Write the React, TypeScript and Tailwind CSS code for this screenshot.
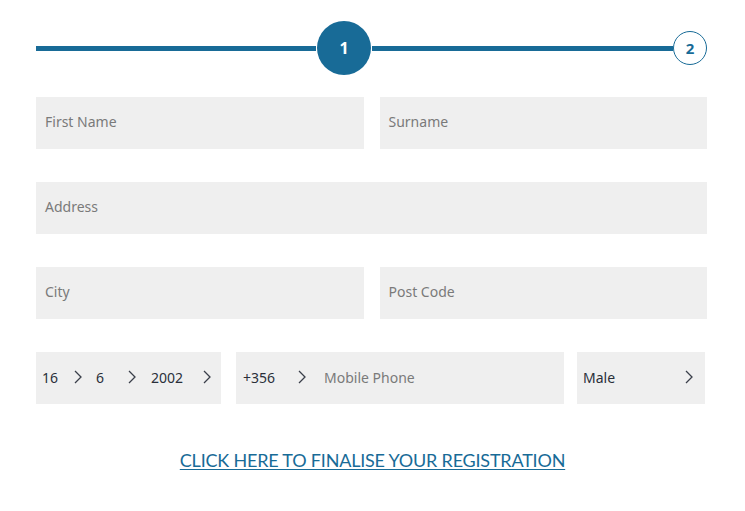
const blue = 'text-[#186b97]';

const Chevron = () => (
  <svg width="8" height="14" viewBox="0 0 8 14" className="shrink-0">
    <polyline points="1,1 7,7 1,13" fill="none" stroke="#3a3f4a" strokeWidth="1.3" />
  </svg>
);

const Field = ({ label, className = '' }: { label: string; className?: string }) => (
  <div className={`h-[52px] bg-[#efefef] flex items-center px-[9px] pb-[3px] text-[14px] text-[#7a7a7a] ${className}`}>
    {label}
  </div>
);

export default function App() {
  return (
    <div className="w-[745px] h-[511px] bg-white font-['Noto_Sans',sans-serif]">
      <div className="pl-[36px] pr-[38px]">
        {/* steps */}
        <div className="flex items-center h-[95px] pt-[1px]">
          <div className="w-[280px] h-[5px] bg-[#186b97]" />
          <div className="w-[54px] h-[54px] rounded-full bg-[#186b97] text-white font-bold text-[16px] flex items-center justify-center mx-[1px] pb-[1px]">
            1
          </div>
          <div className="flex-1 h-[5px] bg-[#186b97]" />
          <div className={`w-[34px] h-[34px] rounded-full border border-[#186b97] ${blue} font-bold text-[15px] flex items-center justify-center`}>
            2
          </div>
        </div>

        <div className="flex flex-col gap-[33px] mt-[2px]">
          <div className="flex gap-[16px]">
            <Field label="First Name" className="flex-1" />
            <Field label="Surname" className="flex-1" />
          </div>
          <Field label="Address" />
          <div className="flex gap-[16px]">
            <Field label="City" className="flex-1" />
            <Field label="Post Code" className="flex-1" />
          </div>
          <div className="flex text-[14px] text-[#2a2f3a]">
            <div className="w-[185px] h-[52px] bg-[#efefef] flex items-center pl-[6px] pb-[2px]">
              <span className="w-[32px] shrink-0">16</span>
              <Chevron />
              <span className="w-[46px] shrink-0 pl-[14px]">6</span>
              <Chevron />
              <span className="w-[67px] shrink-0 pl-[15px]">2002</span>
              <Chevron />
            </div>
            <div className="w-[328px] h-[52px] bg-[#efefef] flex items-center pl-[7px] ml-[15px] pb-[2px]">
              <span className="w-[55px] shrink-0">+356</span>
              <Chevron />
              <span className="ml-[18px] text-[#7a7a7a]">Mobile Phone</span>
            </div>
            <div className="w-[128px] h-[52px] bg-[#efefef] flex items-center justify-between pl-[6px] pr-[12px] ml-[13px] pb-[2px]">
              <span>Male</span>
              <Chevron />
            </div>
          </div>
        </div>

        <div className="flex justify-center mt-[43px] pl-[2px]">
          <a className={`${blue} font-['Lato',sans-serif] text-[18px] underline underline-offset-2 tracking-[-0.2px]`}>
            CLICK HERE TO FINALISE YOUR REGISTRATION
          </a>
        </div>
      </div>
    </div>
  );
}
